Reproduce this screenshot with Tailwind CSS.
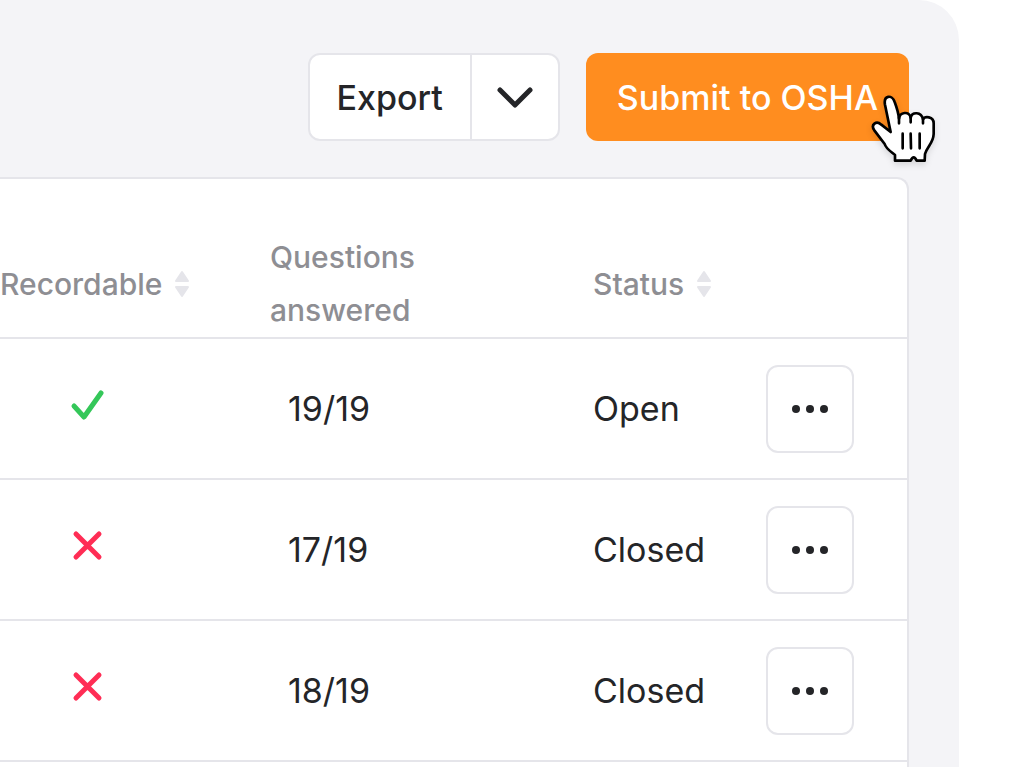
<!DOCTYPE html>
<html lang="en">
<head>
    <meta charset="UTF-8">
    <meta name="viewport" content="width=device-width, initial-scale=1.0">
    <title>OSHA Incident Log</title>

    <!-- Tailwind CSS -->
    <script src="https://cdn.jsdelivr.net/npm/@tailwindcss/browser@4"></script>
</head>
<body class="bg-white font-['Inter',sans-serif] text-[#242528] overflow-hidden">

    <!-- Panel -->
    <main class="mr-[65px] min-h-screen rounded-tr-[40px] bg-[#f4f4f7] pt-[53px] pr-[50px]">

        <!-- Actions -->
        <div class="flex justify-end gap-[26px]">
            <div class="flex h-[88px] rounded-xl border-2 border-[#e5e5ea] bg-white">
                <button type="button" class="px-[27px] text-[34px] font-medium">Export</button>
                <button type="button" aria-label="More export options" class="flex w-[88px] items-center justify-center border-l-2 border-[#e5e5ea]">
                    <svg class="h-6 w-9" viewBox="0 0 36 24" fill="none" stroke="currentColor" stroke-width="5" stroke-linecap="round" stroke-linejoin="round">
                        <path d="M3 5l15 15 15-15" />
                    </svg>
                </button>
            </div>
            <div class="relative">
                <button type="button" class="h-[88px] rounded-xl bg-[#ff8d1f] px-[31px] text-[34px] font-medium text-white">Submit to OSHA</button>
                <!-- Pointer -->
                <svg class="absolute top-[37px] -right-[31px] h-20 w-[70px] drop-shadow-md" viewBox="30 30 210 240" fill="#fff" stroke="#000" stroke-width="8" stroke-linecap="round" stroke-linejoin="round">
                    <path d="M92 156L75 74C70 46 96 42 104 66C110 82 115 96 117 116C119 96 148 92 152 113C156 95 184 94 189 118C194 108 221 108 221 130V162C220 190 201 200 195 222L194 242H170Q161 222 152 242H105V225C92 214 78 206 74 192L43 151C31 134 49 120 64 134Z" />
                    <path d="M117 112V130M152 112V127M189 117V130M128 161V205M152 161L153 205M179 161V205" />
                </svg>
            </div>
        </div>

        <!-- Incidents -->
        <div class="mt-9 rounded-tr-xl border-t-2 border-r-2 border-[#e5e5ea] bg-white pb-10">
            <table class="w-full table-fixed border-separate border-spacing-0 text-left">
                <colgroup>
                    <col class="w-[270px]">
                    <col class="w-[323px]">
                    <col class="w-[173px]">
                    <col>
                </colgroup>
                <thead class="text-[30px] leading-[53px] text-[#8e8e93]">
                    <tr>
                        <th scope="col" class="border-b-2 border-[#e5e5ea] pt-[52px] font-medium">
                            <div class="flex items-center gap-3">
                                Recordable
                                <svg class="h-7 w-4 shrink-0" viewBox="0 0 16 28" fill="#e5e5ea" stroke="#e5e5ea" stroke-width="2" stroke-linejoin="round">
                                    <path d="M8 2l6 9H2zM8 26l6-9H2z" />
                                </svg>
                            </div>
                        </th>
                        <th scope="col" class="border-b-2 border-[#e5e5ea] pt-[52px] font-medium">Questions<br>answered</th>
                        <th scope="col" class="border-b-2 border-[#e5e5ea] pt-[52px] font-medium">
                            <div class="flex items-center gap-3">
                                Status
                                <svg class="h-7 w-4 shrink-0" viewBox="0 0 16 28" fill="#e5e5ea" stroke="#e5e5ea" stroke-width="2" stroke-linejoin="round">
                                    <path d="M8 2l6 9H2zM8 26l6-9H2z" />
                                </svg>
                            </div>
                        </th>
                        <td class="border-b-2 border-[#e5e5ea]"></td>
                    </tr>
                </thead>
                <tbody class="text-[34px]">
                    <tr class="h-[141px]">
                        <td class="border-b-2 border-[#e5e5ea] pb-2 pl-[70px]">
                            <svg role="img" aria-label="Yes" class="h-9 w-9" viewBox="0 0 36 36" fill="none" stroke="#34c759" stroke-width="5" stroke-linecap="round" stroke-linejoin="round">
                                <path d="M4 19l10 11L31 6" />
                            </svg>
                        </td>
                        <td class="border-b-2 border-[#e5e5ea] pl-[18px]">19/19</td>
                        <td class="border-b-2 border-[#e5e5ea]">Open</td>
                        <td class="border-b-2 border-[#e5e5ea]">
                            <button type="button" aria-label="Row actions" class="flex size-[88px] items-center justify-center rounded-xl border-2 border-[#e5e5ea]">
                                <svg class="h-2 w-9" viewBox="0 0 36 8" fill="currentColor"><circle cx="4" cy="4" r="4" /><circle cx="18" cy="4" r="4" /><circle cx="32" cy="4" r="4" /></svg>
                            </button>
                        </td>
                    </tr>
                    <tr class="h-[141px]">
                        <td class="border-b-2 border-[#e5e5ea] pb-2 pl-[70px]">
                            <svg role="img" aria-label="No" class="h-9 w-9" viewBox="0 0 36 36" fill="none" stroke="#ff2d55" stroke-width="5" stroke-linecap="round">
                                <path d="M6 6l23 23M29 6L6 29" />
                            </svg>
                        </td>
                        <td class="border-b-2 border-[#e5e5ea] pl-[18px]">17/19</td>
                        <td class="border-b-2 border-[#e5e5ea]">Closed</td>
                        <td class="border-b-2 border-[#e5e5ea]">
                            <button type="button" aria-label="Row actions" class="flex size-[88px] items-center justify-center rounded-xl border-2 border-[#e5e5ea]">
                                <svg class="h-2 w-9" viewBox="0 0 36 8" fill="currentColor"><circle cx="4" cy="4" r="4" /><circle cx="18" cy="4" r="4" /><circle cx="32" cy="4" r="4" /></svg>
                            </button>
                        </td>
                    </tr>
                    <tr class="h-[141px]">
                        <td class="border-b-2 border-[#e5e5ea] pb-2 pl-[70px]">
                            <svg role="img" aria-label="No" class="h-9 w-9" viewBox="0 0 36 36" fill="none" stroke="#ff2d55" stroke-width="5" stroke-linecap="round">
                                <path d="M6 6l23 23M29 6L6 29" />
                            </svg>
                        </td>
                        <td class="border-b-2 border-[#e5e5ea] pl-[18px]">18/19</td>
                        <td class="border-b-2 border-[#e5e5ea]">Closed</td>
                        <td class="border-b-2 border-[#e5e5ea]">
                            <button type="button" aria-label="Row actions" class="flex size-[88px] items-center justify-center rounded-xl border-2 border-[#e5e5ea]">
                                <svg class="h-2 w-9" viewBox="0 0 36 8" fill="currentColor"><circle cx="4" cy="4" r="4" /><circle cx="18" cy="4" r="4" /><circle cx="32" cy="4" r="4" /></svg>
                            </button>
                        </td>
                    </tr>
                </tbody>
            </table>
        </div>
    </main>
</body>
</html>
